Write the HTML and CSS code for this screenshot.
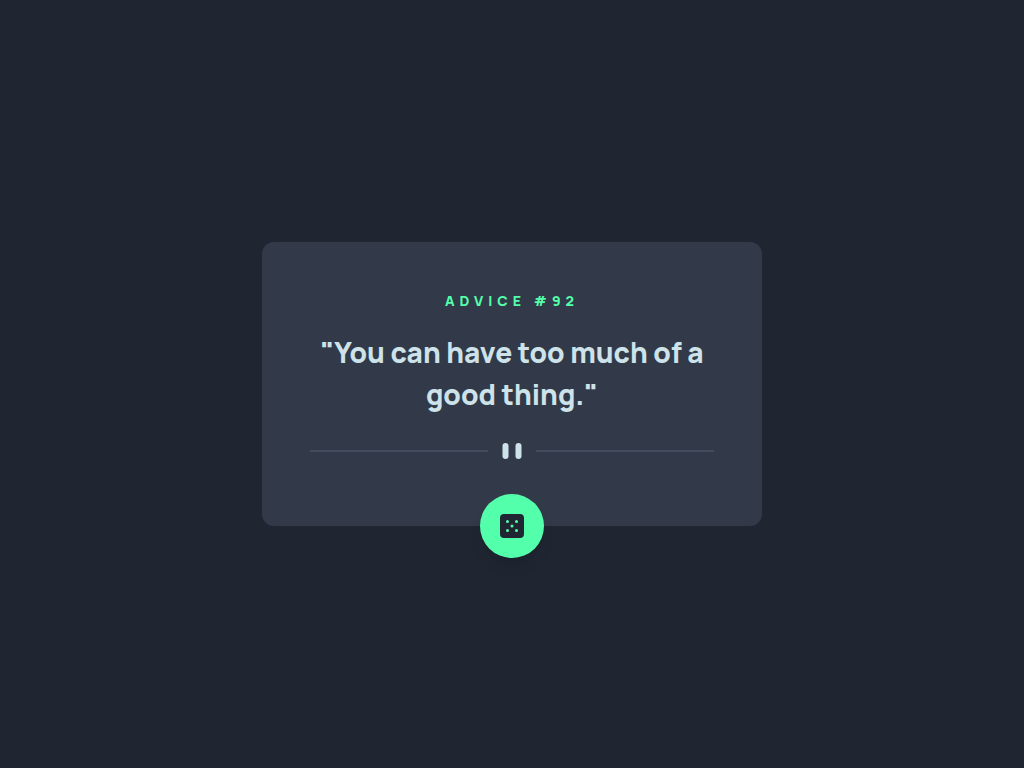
FILE: index.html
```html
<!DOCTYPE html>
<html lang="en">
<head>
<meta charset="utf-8">
<meta name="viewport" content="width=device-width, initial-scale=1">
<title>Advice generator</title>
<link rel="stylesheet" href="styles.css">
</head>
<body>
<main class="card">
  <h1 class="label">Advice #92</h1>
  <p class="quote">"You can have too much of a good thing."</p>
  <div class="divider" aria-hidden="true">
    <span class="line"></span>
    <svg class="pause" width="20" height="16" viewBox="0 0 20 16"><rect x="0.500" width="6" height="16" rx="3"/><rect x="13.500" width="6" height="16" rx="3"/></svg>
    <span class="line"></span>
  </div>
  <button class="dice" type="button" aria-label="New advice">
    <svg width="24" height="24" viewBox="0 0 24 24"><path d="M20 0H4a4.005 4.005 0 0 0-4 4v16a4.005 4.005 0 0 0 4 4h16a4.005 4.005 0 0 0 4-4V4a4.005 4.005 0 0 0-4-4ZM7.500 18a1.500 1.500 0 1 1 0-3 1.500 1.500 0 0 1 0 3Zm0-9a1.500 1.500 0 1 1 0-3 1.500 1.500 0 0 1 0 3Zm4.500 4.500a1.500 1.500 0 1 1 0-3 1.500 1.500 0 0 1 0 3Zm4.500 4.500a1.500 1.500 0 1 1 0-3 1.500 1.500 0 0 1 0 3Zm0-9a1.500 1.500 0 1 1 0-3 1.500 1.500 0 0 1 0 3Z" fill="#202733"/></svg>
  </button>
</main>
</body>
</html>
```
FILE: styles.css
```css
* {
  box-sizing: border-box;
}

body {
  margin: 0;
  min-height: 100vh;
  display: flex;
  align-items: center;
  justify-content: center;
  background: #1f2632;
  font-family: Manrope, Inter, sans-serif;
}

.card {
  display: flex;
  flex-direction: column;
  align-items: center;
  width: 100%;
  max-width: 500px;
  padding: 48px 48px 0;
  border-radius: 12px;
  background: #323a49;
  text-align: center;
}

.label {
  margin: 0;
  font-size: 14px;
  line-height: 21px;
  font-weight: 800;
  letter-spacing: 5px;
  text-transform: uppercase;
  color: #53ffab;
}

.quote {
  margin: 20px 0 28px;
  font-size: 28px;
  line-height: 42px;
  font-weight: 800;
  color: #cee3e9;
}

.divider {
  display: flex;
  align-items: center;
  gap: 14px;
  width: 100%;
  margin-bottom: 35px;
}

.line {
  flex: 1;
  height: 2px;
  background: #414c5e;
}

.pause {
  fill: #cee3e9;
}

.dice {
  display: flex;
  align-items: center;
  justify-content: center;
  width: 64px;
  height: 64px;
  margin-bottom: -32px;
  padding: 0;
  border: 0;
  border-radius: 50%;
  background: #53ffab;
  box-shadow: 0 10px 15px -3px rgba(0, 0, 0, 0.1), 0 4px 6px -4px rgba(0, 0, 0, 0.1);
  cursor: pointer;
}
```
